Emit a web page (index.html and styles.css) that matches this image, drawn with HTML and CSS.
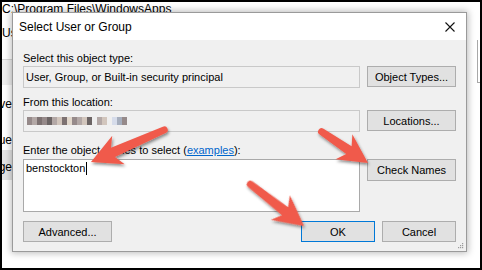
FILE: index.html
```html
<!DOCTYPE html>
<html>
<head>
<meta charset="utf-8">
<link rel="stylesheet" href="styles.css">
</head>
<body>
<div class="frame">
  <div class="bg">
    <div class="path">C:\Program Files\WindowsApps</div>
    <div class="bg-row">
      <div class="strip">
        <div class="s-u">User</div>
        <div class="s-hdr"></div>
        <div class="s-line s-ve"><span>Save</span></div>
        <div class="s-line s-ue"><span>Value</span></div>
        <div class="s-btn"><span>Change</span></div>
      </div>
      <div class="bg-fill"></div>
      <div class="rstrip"></div>
    </div>
  </div>

  <div class="dialog">
    <div class="titlebar">
      <span class="title">Select User or Group</span>
      <svg class="close" width="10" height="10" viewBox="0 0 10 10"><path d="M0.5 0.5 L9.5 9.5 M9.5 0.5 L0.5 9.5" stroke="#111" stroke-width="1.1" fill="none"/></svg>
    </div>
    <div class="dbody">
      <div class="lbl l1">Select this object type:</div>
      <div class="row r1">
        <div class="tbox">User, Group, or Built-in security principal</div>
        <div class="btn">Object Types...</div>
      </div>
      <div class="lbl l2">From this location:</div>
      <div class="row r2">
        <div class="tbox mosaic-box">
          <span class="mosaic">
            <i class="m2"></i><i class="m3"></i><i class="m1"></i><i class="m2"></i><i class="m4"></i><i class="m3"></i><i class="m5"></i><i class="m1"></i><i class="m6"></i><i class="m2"></i><i class="m3"></i><i class="m5"></i><i class="m4"></i><i class="m0"></i><i class="m3"></i><i class="m5"></i><i class="m0"></i><i class="m7"></i><i class="m8"></i><i class="m2"></i>
          </span>
        </div>
        <div class="btn">Locations...</div>
      </div>
      <div class="lbl l3">Enter the object names to select (<span class="link">examples</span>):</div>
      <div class="row r3">
        <div class="tarea">benstockton<span class="caret"></span></div>
        <div class="btn btn-tall">Check Names</div>
      </div>
      <div class="brow">
        <div class="btn bw">Advanced...</div>
        <div class="bright">
          <div class="btn bn ok">OK</div>
          <div class="btn bn">Cancel</div>
        </div>
      </div>
    </div>
    <svg class="grip" width="7" height="7" viewBox="0 0 7 7">
      <rect x="5" y="1" width="1.2" height="1.2" fill="#9a9a9a"/>
      <rect x="3" y="3" width="1.2" height="1.2" fill="#9a9a9a"/>
      <rect x="5" y="3" width="1.2" height="1.2" fill="#9a9a9a"/>
      <rect x="1" y="5" width="1.2" height="1.2" fill="#9a9a9a"/>
      <rect x="3" y="5" width="1.2" height="1.2" fill="#9a9a9a"/>
      <rect x="5" y="5" width="1.2" height="1.2" fill="#9a9a9a"/>
    </svg>
  </div>

  <svg class="arrows" width="482" height="270" viewBox="0 0 482 270">
    <defs>
      <filter id="sh" x="-30%" y="-30%" width="160%" height="160%">
        <feDropShadow dx="1" dy="2" stdDeviation="1.4" flood-color="#000" flood-opacity="0.45"/>
      </filter>
    </defs>
    <g fill="#f05a4b" filter="url(#sh)">
      <path transform="translate(91 162) rotate(156.3)" d="M0 0 L-30 -15.5 L-24 -5 L-80 -3.5 A3.5 3.5 0 0 0 -80 3.5 L-24 5 L-30 15.5 Z"/>
      <path transform="translate(368 163) rotate(34)" d="M0 0 L-29 -15 L-23 -4.8 L-56 -3.5 A3.5 3.5 0 0 0 -56 3.5 L-23 4.8 L-29 15 Z"/>
      <path transform="translate(304 226) rotate(37.9)" d="M0 0 L-30 -15.5 L-24 -5 L-68 -3.5 A3.5 3.5 0 0 0 -68 3.5 L-24 5 L-30 15.5 Z"/>
    </g>
  </svg>
</div>
</body>
</html>
```

FILE: styles.css
```css
* { box-sizing: border-box; }
html, body { margin: 0; padding: 0; background: #fff; }
body { font-family: "Liberation Sans", Arial, sans-serif; color: #000; }

.frame {
  position: relative;
  width: 482px;
  height: 270px;
  border: 2px solid #000;
  overflow: hidden;
  background: #fff;
}

/* background window */
.bg { display: flex; flex-direction: column; }
.path {
  height: 14px;
  line-height: 14px;
  font-size: 12px;
  white-space: nowrap;
  padding-left: 0;
}
.bg-row { display: flex; }
.strip {
  width: 10px;
  overflow: hidden;
  display: flex;
  flex-direction: column;
  font-size: 12px;
}
.s-u { margin-top: 10px; height: 14px; line-height: 14px; white-space: nowrap; }
.s-hdr {
  margin-top: 19px;
  height: 26px;
  border-top: 1px solid #d6d6d6;
  background: #eeeeee;
}
.s-line {
  display: flex;
  justify-content: flex-end;
  height: 14px;
  line-height: 14px;
  white-space: nowrap;
}
.s-ve { margin-top: 12px; }
.s-ue { margin-top: 22px; }
.s-btn {
  margin-top: 3px;
  height: 30px;
  background: #e4e4e4;
  display: flex;
  justify-content: flex-end;
  padding-top: 10px;
  line-height: 14px;
  white-space: nowrap;
}
.bg-fill { flex: 1; }
.rstrip {
  width: 3px;
  margin-top: 24px;
  height: 43px;
  border-left: 1px solid #a8a8a8;
  border-bottom: 1px solid #a8a8a8;
}

/* dialog */
.dialog {
  position: absolute;
  left: 10px;
  top: 10px;
  width: 455px;
  height: 240px;
  border: 1px solid #9a9a9a;
  background: #f0f0f0;
  box-shadow: 0 0 7px 1px rgba(0,0,0,0.28);
  display: flex;
  flex-direction: column;
}
.titlebar {
  height: 27px;
  background: #fff;
  display: flex;
  align-items: center;
  justify-content: space-between;
  padding: 0 11px 0 6px;
}
.title { font-size: 12px; line-height: 14px; }
.close { display: block; }

.dbody {
  flex: 1;
  padding: 11px 10px 0 10px;
  font-size: 11px;
}
.lbl { height: 14px; line-height: 14px; white-space: nowrap; }
.l2 { margin-top: 7px; }
.l3 { margin-top: 11px; }
.link { color: #0066cc; text-decoration: underline; }

.row {
  display: grid;
  grid-template-columns: 337px 89px;
  column-gap: 7px;
  align-items: start;
}
.r1 { margin-top: 1px; }
.r2 { margin-top: 1px; }
.r3 { margin-top: 2px; }

.tbox {
  height: 22px;
  border: 1px solid #c9c9c9;
  background: #f0f0f0;
  padding: 0 2px;
  line-height: 20px;
  white-space: nowrap;
  display: flex;
  align-items: center;
}
.mosaic { display: flex; height: 8px; margin-left: 1px; }
.mosaic i { display: block; width: 5px; height: 8px; }
.m0 { background: #efefef; }
.m1 { background: #7d7272; }
.m2 { background: #968a8a; }
.m3 { background: #b3a8a6; }
.m4 { background: #6c6565; }
.m5 { background: #d2c6bd; }
.m6 { background: #e2d8cc; }
.m7 { background: #d6dcea; }
.m8 { background: #a6aebd; }

.tarea {
  height: 53px;
  border: 1px solid #a9a9a9;
  background: #fff;
  padding: 1px 2px;
  line-height: 14px;
  white-space: nowrap;
}
.caret {
  display: inline-block;
  width: 1px;
  height: 13px;
  background: #000;
  vertical-align: -3px;
  margin-left: 1px;
}

.btn {
  height: 21px;
  border: 1px solid #adadad;
  background: #e1e1e1;
  display: flex;
  align-items: center;
  justify-content: center;
  white-space: nowrap;
}
.btn-tall { height: 22px; }
.brow {
  margin-top: 9px;
  display: flex;
  justify-content: space-between;
}
.bw { width: 89px; }
.bright { display: flex; gap: 7px; }
.bn { width: 74px; }
.ok { border-color: #0078d7; }

.grip { position: absolute; right: 2px; bottom: 2px; }

.arrows {
  position: absolute;
  left: -2px;
  top: -2px;
  pointer-events: none;
}
```
